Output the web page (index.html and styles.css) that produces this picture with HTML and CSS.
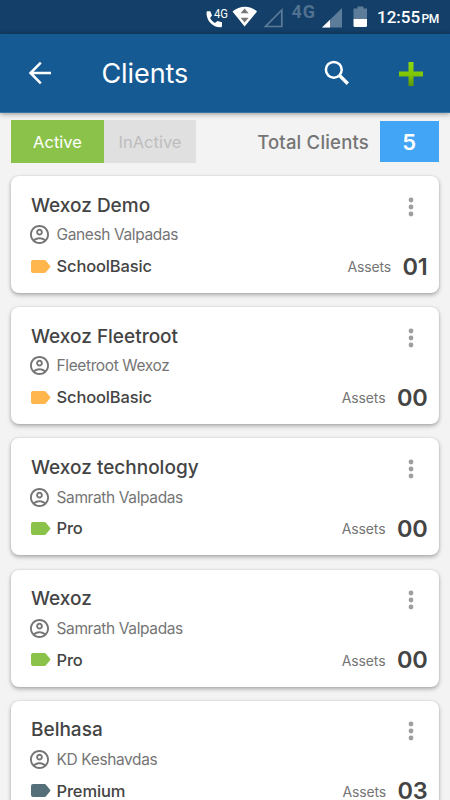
FILE: index.html
```html
<!DOCTYPE html>
<html lang="en">
<head>
<meta charset="utf-8">
<title>Clients</title>
<link rel="stylesheet" href="styles.css">
</head>
<body>
<svg class="defs" width="0" height="0">
    <symbol id="user" viewBox="2 2 20 20"><path d="M12 2C6.48 2 2 6.48 2 12s4.48 10 10 10 10-4.48 10-10S17.52 2 12 2zM7.35 18.5C8.66 17.56 10.26 17 12 17s3.34.56 4.65 1.5C15.34 19.44 13.74 20 12 20s-3.34-.56-4.65-1.5zm10.79-1.38C16.45 15.8 14.32 15 12 15s-4.45.8-6.14 2.12C4.7 15.73 4 13.95 4 12c0-4.42 3.58-8 8-8s8 3.58 8 8c0 1.95-.7 3.73-1.86 5.12zM12 6c-1.93 0-3.5 1.57-3.5 3.5S10.07 13 12 13s3.5-1.57 3.5-3.5S13.93 6 12 6zm0 5c-.83 0-1.5-.67-1.5-1.5S11.17 8 12 8s1.5.67 1.5 1.5S12.83 11 12 11z"/></symbol>
    <symbol id="label" viewBox="0 0 20 13"><path d="M2 0H13.3Q14.5 0 15.2 .9L19.6 6.5 15.2 12.1Q14.5 13 13.3 13H2Q0 13 0 11V2Q0 0 2 0z"/></symbol>
    <symbol id="more" viewBox="0 0 6 20"><circle cx="3" cy="3" r="2.4"/><circle cx="3" cy="10" r="2.4"/><circle cx="3" cy="17" r="2.4"/></symbol>
</svg>

<div class="status">
    <svg class="status-icons" width="172" height="34" viewBox="0 0 172 34">
        <path fill="#fff" d="M2.5 11.2h2.8l1.7 4.300-2 2.500c1.200 2.300 2.700 3.700 5 4.900l2.400-2 4.600 1.300v3.600c0 1-.6 1.500-1.600 1.500C7.500 27.300 1.500 21 1.500 12.800c0-1 .3-1.600 1-1.600z"/>
        <text class="net-small" x="9" y="17.5" textLength="14" lengthAdjust="spacingAndGlyphs">4G</text>
        <path fill="#fff" d="M27.5 11.5C34.5 5.2 45.5 5.2 52 11.5L39.6 26.5z"/>
        <path fill="#777" d="M39.6 8.5l4 4.7h-8zM39.6 22.5l4-4.7h-8z"/>
        <path fill="none" stroke="#5c7c99" stroke-width="1.7" d="M76.8 10v16.500H60.5z"/>
        <text class="net-big" x="86.5" y="18" textLength="23.5">4G</text>
        <path fill="#5c7c99" d="M137 8v19.5h-20z"/>
        <path fill="#fff" d="M125 19.7v7.800h-8z"/>
        <path fill="#5c7c99" d="M148.5 8.500h4v-2h6v2h3.500v10.500h-13.500z"/>
        <path fill="#fff" d="M148.5 19h13.500v6.500q0 1.500-1.500 1.500h-10.500q-1.500 0-1.500-1.500z"/>
    </svg>
    <div class="clock">12:55</div>
    <div class="pm">PM</div>
</div>

<header class="appbar">
    <svg class="back" width="24" height="24" viewBox="0 0 24 24"><path fill="none" stroke="#fff" stroke-width="2.5" d="M12.8 1.7L2.5 12l10.3 10.3M2.5 12H23"/></svg>
    <h1>Clients</h1>
    <svg class="search" width="26" height="26" viewBox="0 0 26 26"><circle cx="9.8" cy="9.8" r="7.9" fill="none" stroke="#fff" stroke-width="2.5"/><path stroke="#fff" stroke-width="3.4" d="M15.3 15.3l8.5 8.5"/></svg>
    <svg class="add" width="26" height="26" viewBox="0 0 26 26">
        <linearGradient id="green" x2="0" y2="1"><stop offset="0" stop-color="#8bd80c"/><stop offset=".5" stop-color="#82c806"/><stop offset="1" stop-color="#5f9607"/></linearGradient>
        <path fill="url(#green)" d="M10.5 1h5v9.500h9.500v5h-9.500v9.500h-5v-9.500H1v-5h9.500z"/>
    </svg>
</header>

<div class="summary">
    <div class="tab active"><span>Active</span></div>
    <div class="tab inactive"><span>InActive</span></div>
    <div class="total">Total Clients</div>
    <div class="count">5</div>
</div>

<main class="list">
    <section class="card">
        <div class="top"><h2>Wexoz Demo</h2><svg class="more"><use href="#more"/></svg></div>
        <div class="owner"><svg><use href="#user"/></svg><span>Ganesh Valpadas</span></div>
        <div class="plan basic"><svg><use href="#label"/></svg><span>SchoolBasic</span><div class="assets">Assets</div><b>01</b></div>
    </section>
    <section class="card">
        <div class="top"><h2>Wexoz Fleetroot</h2><svg class="more"><use href="#more"/></svg></div>
        <div class="owner"><svg><use href="#user"/></svg><span>Fleetroot Wexoz</span></div>
        <div class="plan basic"><svg><use href="#label"/></svg><span>SchoolBasic</span><div class="assets">Assets</div><b>00</b></div>
    </section>
    <section class="card">
        <div class="top"><h2>Wexoz technology</h2><svg class="more"><use href="#more"/></svg></div>
        <div class="owner"><svg><use href="#user"/></svg><span>Samrath Valpadas</span></div>
        <div class="plan pro"><svg><use href="#label"/></svg><span>Pro</span><div class="assets">Assets</div><b>00</b></div>
    </section>
    <section class="card">
        <div class="top"><h2>Wexoz</h2><svg class="more"><use href="#more"/></svg></div>
        <div class="owner"><svg><use href="#user"/></svg><span>Samrath Valpadas</span></div>
        <div class="plan pro"><svg><use href="#label"/></svg><span>Pro</span><div class="assets">Assets</div><b>00</b></div>
    </section>
    <section class="card">
        <div class="top"><h2>Belhasa</h2><svg class="more"><use href="#more"/></svg></div>
        <div class="owner"><svg><use href="#user"/></svg><span>KD Keshavdas</span></div>
        <div class="plan premium"><svg><use href="#label"/></svg><span>Premium</span><div class="assets">Assets</div><b>03</b></div>
    </section>
</main>
</body>
</html>
```
FILE: styles.css
```css
* {
    box-sizing: border-box;
}
body {
    margin: 0;
    height: 800px;
    overflow: hidden;
    display: flex;
    flex-direction: column;
    background: #f3f3f3;
    font-family: Inter, sans-serif;
    color: #444;
}
h1, h2 {
    margin: 0;
}
svg {
    flex: none;
}
.defs {
    position: absolute;
}

.status {
    flex: none;
    display: flex;
    height: 34px;
    padding-left: 205px;
    background: #133f68;
    color: #fff;
    font-family: Roboto, sans-serif;
    font-weight: 500;
}
.net-small {
    font-size: 12px;
    font-weight: 400;
    fill: #fff;
}
.net-big {
    font-size: 18px;
    font-weight: 700;
    fill: #50718f;
}
.clock {
    width: 44.5px;
    font-size: 17px;
    line-height: 35px;
    white-space: nowrap;
}
.pm {
    font-size: 12px;
    line-height: 38px;
    letter-spacing: -.3px;
}

.appbar {
    flex: none;
    display: flex;
    align-items: center;
    height: 79px;
    padding: 0 26.5px 0 28px;
    border-bottom: 1px solid #3c73a6;
    background: #165a94;
    box-shadow: 0 1px 5px rgba(0, 0, 0, .4);
    color: #fff;
}
.appbar h1 {
    margin: 2px 0 0 49.5px;
    font-size: 27px;
    font-weight: 400;
    line-height: 34px;
    letter-spacing: -.1px;
}
.search {
    margin-left: auto;
}
.add {
    margin: 1px 0 0 47.5px;
}

.summary {
    flex: none;
    display: flex;
    align-items: center;
    height: 43px;
    margin: 7px 11.5px 0 11px;
}
.tab {
    display: flex;
    align-items: center;
    justify-content: center;
    height: 43px;
    font-size: 16.5px;
}
.active {
    width: 93px;
    background: #8bc34a;
    color: #fff;
}
.inactive {
    width: 92px;
    background: #e0e0e0;
    color: #bdbdbd;
}
.total {
    margin-left: auto;
    color: #757575;
    font-size: 18.5px;
    font-weight: 500;
    letter-spacing: .2px;
}
.count {
    width: 58.5px;
    height: 41px;
    margin-left: 11px;
    background: #42a5f5;
    color: #fff;
    font-size: 22px;
    font-weight: 600;
    line-height: 42px;
    text-align: center;
}

.list {
    display: flex;
    flex-direction: column;
    gap: 14.2px;
    padding: 13px 11.5px 0 11px;
}
.card {
    flex: none;
    height: 117px;
    padding: 15.5px 11px 0 20px;
    border-radius: 8px;
    background: #fff;
    box-shadow: 0 2px 4px rgba(0, 0, 0, .3), 0 0 2px rgba(0, 0, 0, .12);
}
.top {
    display: flex;
    align-items: center;
    height: 27px;
}
.top h2 {
    flex: 1;
    font-size: 19px;
    font-weight: 500;
}
.more {
    width: 6px;
    height: 20px;
    margin: 3px 14px 0 0;
    fill: #9e9e9e;
}
.owner {
    display: flex;
    align-items: center;
    height: 32.5px;
    color: #757575;
    font-size: 15.5px;
    letter-spacing: -.38px;
}
.owner svg {
    width: 19px;
    height: 19px;
    margin: 0 7.5px 0 -1px;
    fill: #757575;
}
.plan {
    display: flex;
    align-items: center;
    height: 30px;
    font-size: 16.5px;
    font-weight: 500;
    letter-spacing: -.15px;
}
.plan svg {
    width: 20px;
    height: 13px;
    margin-right: 5.5px;
}
.basic svg {
    fill: #ffb74d;
}
.pro svg {
    fill: #8bc34a;
}
.premium svg {
    fill: #546e7a;
}
.assets {
    margin: 1px 11.5px 0 auto;
    color: #757575;
    font-size: 14px;
    font-weight: 400;
}
.plan b {
    margin-top: 1px;
    font-size: 23.5px;
    font-weight: 600;
    line-height: 18px;
    letter-spacing: -.2px;
}
```
